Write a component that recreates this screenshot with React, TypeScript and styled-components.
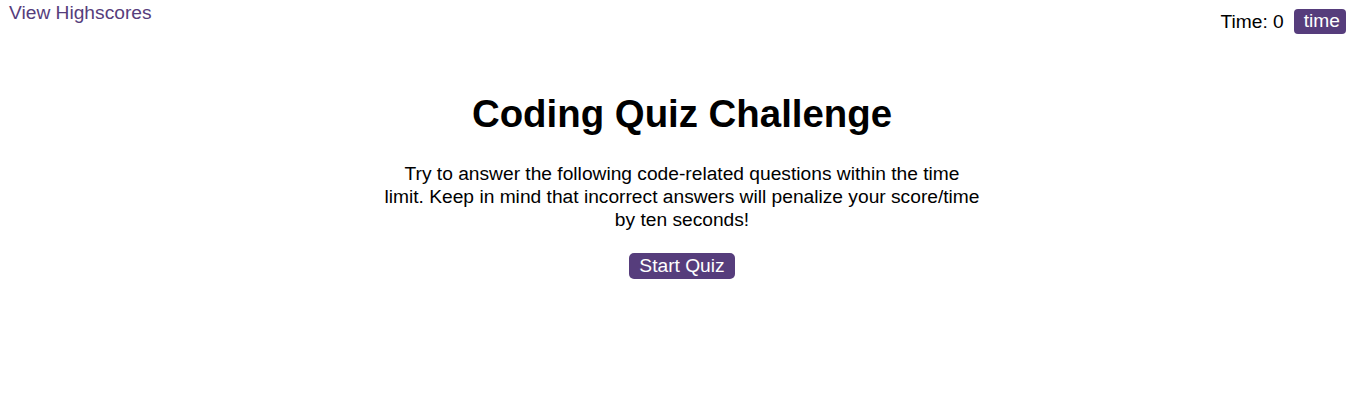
import React from "react";
import styled, { createGlobalStyle } from "styled-components";

const Global = createGlobalStyle`
  html, body { margin: 0; padding: 0; background: #fff; }
  body { font-family: "Liberation Sans", Arial, sans-serif; color: #000; font-size: 19.2px; }
`;

const Header = styled.header`
  display: flex;
  justify-content: space-between;
  align-items: flex-start;
`;

const Link = styled.a`
  color: #563d7c;
  text-decoration: none;
  padding: 2px 9px;
  cursor: pointer;
`;

const Timer = styled.div`
  display: flex;
  align-items: center;
  gap: 10px;
  padding-top: 9px;
`;

const Badge = styled.span`
  background: #563d7c;
  color: #fff;
  border-radius: 4px;
  padding: 1px 6px 2px 10px;
`;

const Main = styled.main`
  display: flex;
  flex-direction: column;
  align-items: center;
  text-align: center;
  padding-left: 18px;
`;

const Title = styled.h1`
  font-size: 2em;
  font-weight: bold;
  margin: 58px 0 0;
`;

const Intro = styled.p`
  max-width: 640px;
  line-height: 23px;
  margin: 26px 0 0;
`;

const Button = styled.button`
  font-family: inherit;
  font-size: 1em;
  background: #563d7c;
  color: #fff;
  border: none;
  border-radius: 5px;
  padding: 2px 10px;
  margin-top: 22px;
  cursor: pointer;
`;

export default function App() {
  return (
    <>
      <Global />
      <Header>
        <Link>View Highscores</Link>
        <Timer>
          <span>Time: 0</span>
          <Badge>time</Badge>
        </Timer>
      </Header>
      <Main>
        <Title>Coding Quiz Challenge</Title>
        <Intro>
          Try to answer the following code-related questions within the time
          <br />
          limit. Keep in mind that incorrect answers will penalize your score/time
          <br />
          by ten seconds!
        </Intro>
        <Button>Start Quiz</Button>
      </Main>
    </>
  );
}
